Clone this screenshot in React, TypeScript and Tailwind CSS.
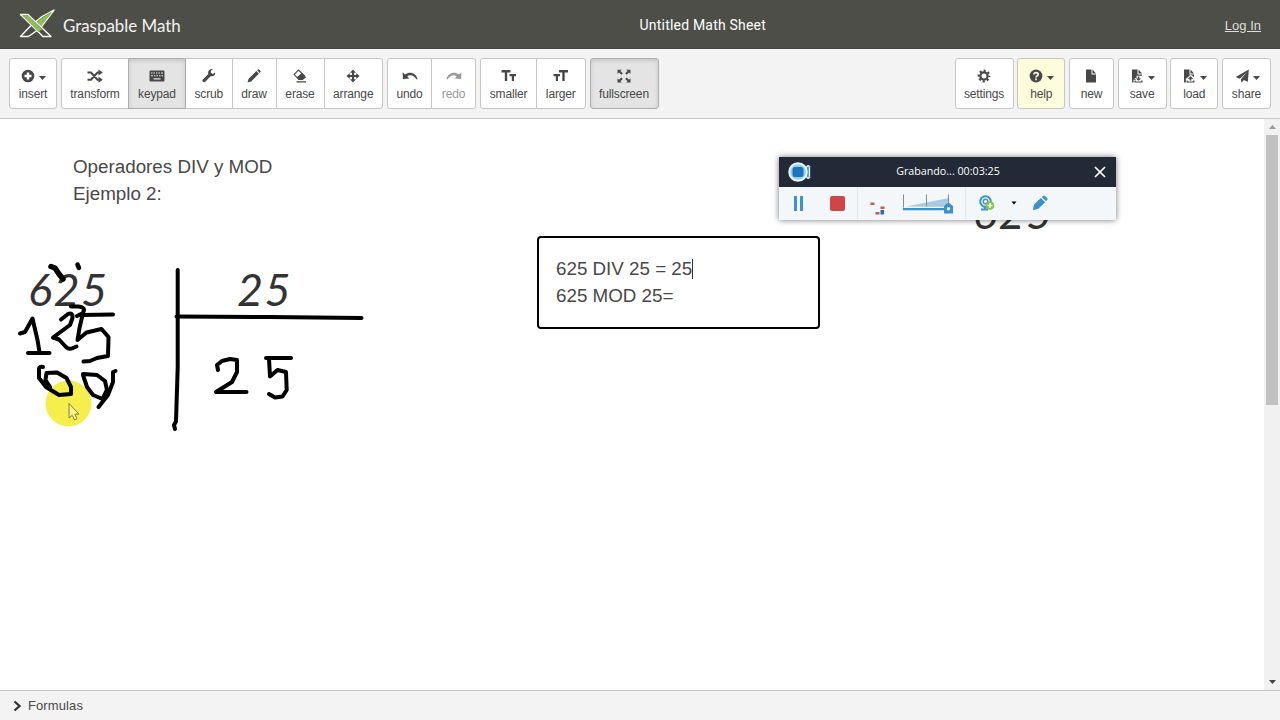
import type { ReactNode } from 'react';
import clsx from 'clsx';

const Icon = ({ children, w = 16 }: { children: ReactNode; w?: number }) => (
  <svg width={w} height="16" viewBox={`0 0 ${w} 16`} fill="currentColor">
    {children}
  </svg>
);

const Caret = () => <svg width="7" height="4" viewBox="0 0 7 4" className="mt-1" fill="currentColor"><path d="M0 0h7L3.500 4z" /></svg>;

const icons = {
  insert: (
    <Icon>
      <path fillRule="evenodd" d="M8 1.700a6.300 6.300 0 1 0 0 12.600A6.300 6.300 0 0 0 8 1.700zM6.800 4.500h2.400v2.300h2.300v2.400H9.200v2.300H6.800V9.200H4.500V6.800h2.300z" />
    </Icon>
  ),
  transform: (
    <Icon>
      <path d="M0.500 4.500H4l6.500 7.200H13M.5 11.700H4l6.500-7.200H13" fill="none" stroke="currentColor" strokeWidth="2" />
      <path d="M11.500 1.500l4.300 3-4.300 3zM11.500 8.700l4.300 3-4.300 3z" />
    </Icon>
  ),
  keypad: (
    <Icon>
      <path fillRule="evenodd" d="M1.500 2.500h13a1 1 0 0 1 1 1v9a1 1 0 0 1-1 1h-13a1 1 0 0 1-1-1v-9a1 1 0 0 1 1-1zM2 4.500v1h1.500v-1zm2.500 0v1H6v-1zm2.500 0v1h1.500v-1zm2.500 0v1H11v-1zm2.500 0v1h2v-1zM2 7.300v1h2v-1zm3 0v1h1.500v-1zm2.500 0v1H9v-1zm2.500 0v1h1.500v-1zm2.500 0v1H14v-1zM4.500 10.300v1.200h7v-1.200z" />
    </Icon>
  ),
  scrub: (
    <Icon>
      <path d="M14.200 4.600l-2.400 1.300-1.900-1.200.1-2.200 2.100-1.200c-2-.6-4.200.3-4.800 2.200-.3.8-.2 1.600 0 2.400L1.900 11.400c-.8.8-.5 1.800.1 2.300.6.6 1.600.7 2.300 0l5.300-5.500c2.800.7 5-1.100 4.600-3.600z" />
    </Icon>
  ),
  draw: (
    <Icon>
      <path d="M1.500 14.500l1.100-3.700 7.700-7.700 2.600 2.600-7.700 7.700zM11.100 2.300l.9-.9c.7-.5 3.300 1.800 2.600 2.700l-.9.9z" />
    </Icon>
  ),
  erase: (
    <Icon>
      <path d="M2.200 6.400L6.500 2l6 5.800-4.200 3.500H6.500z" fill="#fff" stroke="currentColor" strokeWidth="1.100" />
      <path d="M4.800 9.300L9.700 5l4.400 4.200-3.400 2.700H6.900zM4.500 13.200h9.500v1.200H4.500z" />
    </Icon>
  ),
  arrange: (
    <Icon>
      <path d="M8 1.500l3 3.200H9.100v2.200h2.200V5l3.200 3-3.200 3V9.100H9.100v2.200H11l-3 3.200-3-3.200h1.900V9.100H4.700V11L1.500 8l3.200-3v1.900h2.200V4.700H5z" />
    </Icon>
  ),
  undo: (
    <Icon>
      <path d="M.6 4.200l.3 6.900 6.500-.5-2.100-2c2.300-2.300 6.300-1.800 9.100 2.600h1.200C14 5 8 2.800 3.100 6.500z" />
    </Icon>
  ),
  redo: (
    <Icon>
      <path d="M15.400 4.200l-.3 6.900-6.500-.5 2.100-2C8.400 6.300 4.400 6.800 1.600 11.200H.4C2 5 8 2.800 12.900 6.500z" />
    </Icon>
  ),
  smaller: (
    <Icon>
      <path d="M.5 2h9v2.500H6.200V13H3.800V4.500H.5zM8.500 6H15v2.200h-2V13h-2.200V8.200H8.500z" />
    </Icon>
  ),
  larger: (
    <Icon>
      <path d="M6 2h9v2.500h-3.300V13H9.300V4.500H6zM.5 6H7v2.200H5V13H2.800V8.200H.5z" />
    </Icon>
  ),
  fullscreen: (
    <Icon>
      <path d="M1.500 1.700h4.300L4.500 3l2.300 2.300-1.500 1.500L3 4.500 1.500 6zM14.500 1.700h-4.300L11.500 3 9.200 5.300l1.500 1.500L13 4.500 14.500 6zM1.500 14.500h4.300l-1.300-1.300 2.300-2.300-1.500-1.500L3 11.700l-1.500-1.500zM14.500 14.500h-4.300l1.300-1.300-2.300-2.300 1.500-1.500 2.300 2.300 1.500-1.500z" />
    </Icon>
  ),
  settings: (
    <Icon>
      <circle cx="8" cy="8" r="3.600" fill="none" stroke="currentColor" strokeWidth="2.200" />
      <circle cx="8" cy="8" r="5.300" fill="none" stroke="currentColor" strokeWidth="2.200" strokeDasharray="2.100 2.063" strokeDashoffset="1.050" />
    </Icon>
  ),
  help: (
    <Icon>
      <circle cx="8" cy="8" r="6.400" />
      <path d="M5.800 6.600C5.800 3.800 10.200 4 10.200 6.400 10.200 8 8 7.800 8 9.500M8 10.600v1.700" fill="none" stroke="#fdfddf" strokeWidth="1.700" />
    </Icon>
  ),
  new: (
    <Icon>
      <path d="M3 1.500h5.500V6.500H13v8H3zM9.500 1.500L13 5.500H9.500z" />
    </Icon>
  ),
  save: (
    <Icon>
      <path d="M3 1.500h5.500V6.500H13v1.300H7.500v2.200H5.500L7 11.800H4.500v2.700H3zM9.500 1.500L13 5.500H9.500z" />
      <path d="M8.700 8.500h1.600v2h1.900l-2.700 2.300-2.700-2.300h1.900zM5.500 12.500h1.300v1h5.400v-1h1.300v2h-8z" />
    </Icon>
  ),
  load: (
    <Icon>
      <path d="M3 1.500h5.500V6.500H13v2.500L9.500 6.700 4.800 11v3.500H3zM9.500 1.500L13 5.500H9.500z" />
      <path d="M9.500 8.200l2.900 2.500h-2v1.800H8.600v-1.800h-2zM5.500 12.500h1.300v1h5.400v-1h1.300v2h-8z" />
    </Icon>
  ),
  share: (
    <Icon>
      <path d="M14.800 1.500l-.9 12.200-4-1.700-2.400 2.700-.6-3.500 6-7-7.200 6.500-4-1.800z" />
    </Icon>
  ),
};

interface ToolProps {
  name: keyof typeof icons;
  width: string;
  caret?: boolean;
  active?: boolean;
  disabled?: boolean;
  highlight?: boolean;
}

const Tool = ({ name, width, caret, active, disabled, highlight }: ToolProps) => (
  <button
    className={clsx(
      'flex h-[51px] shrink-0 flex-col items-center border pt-[9px] text-[12px] leading-[18px] tracking-[-0.15px] first:rounded-l-[3px] last:rounded-r-[3px] not-first:-ml-px',
      width,
      active ? 'z-10 border-[#adadad] bg-[#e4e4e4] shadow-[inset_0_2px_4px_rgba(0,0,0,0.13)]' : 'border-[#c6c6c6]',
      highlight && 'bg-[#fdfddc]',
      !active && !highlight && 'bg-white',
      disabled ? 'text-[#999]' : 'text-[#484848]'
    )}
  >
    <span className="flex h-4 items-center gap-[3px]">
      {icons[name]}
      {caret && <Caret />}
    </span>
    <span className="mt-px">{name}</span>
  </button>
);

const Group = ({ children }: { children: ReactNode }) => <div className="flex">{children}</div>;

const Logo = () => (
  <svg width="38" height="32" viewBox="0 0 38 32" strokeLinejoin="round" strokeWidth="1.400">
    <path d="M36 2L22.500 20 10.500 28.500H2.500L12 18.500 24 8.500z" fill="#4e4e49" stroke="#fff" />
    <path d="M34.500 4L22.500 18.500 18.500 14.500 25 9z" fill="#8cc152" />
    <path d="M2.500 6.500h7.500L33 28.500h-8z" fill="#4e4e49" stroke="#fff" />
    <path d="M4.500 7.300h5.200L24 21.500 20.500 24z" fill="#8cc152" />
  </svg>
);

// freehand strokes, in window coordinates
const strokes = [
  'M20 333.500L25 332L32.500 318.500L37.500 340L39.500 352',
  'M28 353H49.500',
  'M61 319.500L68 314Q73 312 72.500 318L70 325L53 337.500L59 339.500L66 347Q69 350 73 348L76.500 346.500',
  'M71 306.500H78Q84 307 84 310L83 313L77 316',
  'M82 315L113 314.500',
  'M83 313L79.500 328L77.500 340L86.500 332.500L101.500 329L108.500 337L108 356L97 358L90 361L83.500 361.500',
  'M43 367Q39 366 39 369V378L46 387L59 395L71 394V387L66.500 378L57 372.500L46.500 373L45.500 380L50 387',
  'M83 375L87 387L93 395L102.500 399L107 390L105 381L97 375L83 374',
  'M115.500 371L113 372V382L108 395L98.500 407',
  'M177.700 270V367L176 421.500L174 425L175 429',
  'M176.500 316.500L270 317L361.500 318',
  'M218 370L217 365L222 361L230 359L237 360V372L232 382L216 392H246.500',
  'M266 358L291 358',
  'M269 359L270 376.500L277.500 370L286 372L286.700 390L282.500 396.500L275 397.500L269 394',
];

const Ink = () => (
  <svg className="absolute top-0 left-0" width="1264" height="571" viewBox="0 119 1264 571" fill="none">
    <circle cx="68.500" cy="403.500" r="23" fill="#f5ee4c" />
    <g stroke="#000" strokeWidth="4" strokeLinecap="round" strokeLinejoin="round">
      {strokes.map((d) => <path key={d} d={d} />)}
      <path d="M51 266.500L55 268L59 274L63 279" strokeWidth="5.500" />
      <path d="M77.500 264.500L79 268" strokeWidth="4.500" />
    </g>
    <path d="M69 403.500V418L72.200 415.300L74.500 420L77 418.800L74.800 414.300L79 414z" fill="#f6f190" stroke="#77753a" strokeWidth="0.900" />
  </svg>
);

const MathTerm = ({ className, children }: { className: string; children: ReactNode }) => (
  <div className={clsx("absolute font-['Lato','Open_Sans',sans-serif] text-[45px] leading-[48px] tracking-[1.5px] text-[#333] italic", className)}>{children}</div>
);

const Recorder = () => (
  <div className="absolute top-[38px] left-[779px] h-[63px] w-[337px] bg-[#f4f7f9] font-['Open_Sans','Noto_Sans',sans-serif] shadow-[0_0_6px_rgba(0,0,0,0.55)]">
    <div className="flex h-[30px] items-center bg-[#212a36] pr-[10px] pl-[9px] text-white">
      <svg width="23" height="20" viewBox="0 0 23 20">
        <path d="M15 8l5-4.500 1.500.8v11.400l-1.500.8-5-4.500z" fill="#3498d8" stroke="#e8f3fb" strokeWidth="1.300" />
        <circle cx="10" cy="10" r="8.800" fill="#8fd0f3" stroke="#f2f8fc" strokeWidth="1.900" />
        <rect x="4.500" y="5" width="11" height="10" rx="2.500" fill="#1b74bb" />
      </svg>
      <span className="flex-1 pr-[9px] pb-px text-center text-[10.700px]">Grabando... 00:03:25</span>
      <svg width="12" height="12" viewBox="0 0 12 12" stroke="#fff" strokeWidth="1.700"><path d="M1 1l10 10M11 1L1 11" /></svg>
    </div>
    <div className="flex h-[32px] items-center">
      <div className="flex w-[39px] justify-center gap-[3px]">
        <span className="h-[15px] w-[3px] bg-[#3f93c9]" />
        <span className="h-[15px] w-[3px] bg-[#3f93c9]" />
      </div>
      <div className="flex w-[39px] justify-center">
        <span className="size-[15px] rounded-[2px] bg-[#cf4648]" />
      </div>
      <div className="flex h-8 w-[109px] items-center border-x border-[#e6e9eb]">
        <svg width="107" height="32" viewBox="858 187 107 32">
          <path d="M870.500 202.500h4v2.500h-4zM880.500 206.500h4v2.500h-4zM875.500 212h4v2.500h-4z" fill="#c2595b" />
          <path d="M880.500 210h3.500v4.500h-3.500z" fill="#2f68b5" />
          <path d="M906 206.500L949 198v9z" fill="#a6cbe3" />
          <path d="M903.500 194.500v13M926.500 194.500v12M948.500 194.500v12" stroke="#777f86" strokeWidth="0.900" />
          <path d="M903 208h46v2.200h-46z" fill="#3b91ca" />
          <path d="M944 206l4.500-3.500 4.500 3.500v7.500h-9z" fill="#3b91ca" />
          <circle cx="948.500" cy="208.700" r="1.700" fill="#eef5fa" />
        </svg>
      </div>
      <svg className="ml-[12px]" width="18" height="16" viewBox="0 0 18 16" fill="none">
        <circle cx="7.500" cy="6.500" r="5.300" stroke="#3f93c9" strokeWidth="2" />
        <circle cx="7.500" cy="6.500" r="2.300" stroke="#3f93c9" strokeWidth="1.500" />
        <path d="M7 12v1.500M3 14.500h7" stroke="#3f93c9" strokeWidth="1.800" />
        <circle cx="12" cy="10.500" r="4.300" fill="#83c340" />
        <path d="M12 8v5M9.500 10.500h5" stroke="#fff" strokeWidth="1.400" />
      </svg>
      <svg className="ml-[15px]" width="6" height="4" viewBox="0 0 6 4"><path d="M.5.5h5L3 3.500z" /></svg>
      <svg className="ml-[15px]" width="16" height="16" viewBox="0 0 16 16" fill="#3b91ca">
        <path d="M.8 15.200l1.200-5.700 6.900-6.600 4.300 4.300-6.900 6.600zM9.800 2L11 .9q1-.9 2 0l2.100 2.100q1 1 0 2L14 6.200z" />
      </svg>
    </div>
  </div>
);

export default function App() {
  return (
    <div className="flex h-[720px] w-[1280px] flex-col overflow-hidden bg-white font-['Liberation_Sans',Arial,sans-serif] text-[#484848]">
      <header className="flex h-[49px] shrink-0 items-center border-b border-[#464642] bg-[#4e4e49] pr-[19px] pl-[18px] text-white">
        <div className="flex flex-1 items-center gap-[7px]">
          <Logo />
          <span className="pt-[3px] font-['Lato',sans-serif] text-[16.900px] leading-6 text-[#f2f2f2]">Graspable Math</span>
        </div>
        <div className="pt-0.5 font-['Roboto',sans-serif] text-[14px] tracking-[0.200px]">Untitled Math Sheet</div>
        <div className="w-[495px] pt-[3px] text-right text-[13px] text-[#ddd] underline">Log In</div>
      </header>

      <div className="flex h-[70px] shrink-0 justify-between border-b border-[#c8c8c8] bg-[#f3f3f3] pt-[9px] pr-[9px] pl-[9px]">
        <div className="flex gap-1">
          <Group><Tool name="insert" width="w-12" caret /></Group>
          <Group>
            <Tool name="transform" width="w-[68px]" />
            <Tool name="keypad" width="w-[58px]" active />
            <Tool name="scrub" width="w-[47.5px]" />
            <Tool name="draw" width="w-[45px]" />
            <Tool name="erase" width="w-[49px]" />
            <Tool name="arrange" width="w-[59.5px]" />
          </Group>
          <Group>
            <Tool name="undo" width="w-[45px]" />
            <Tool name="redo" width="w-[45px]" disabled />
          </Group>
          <Group>
            <Tool name="smaller" width="w-[57px]" />
            <Tool name="larger" width="w-[49.5px]" />
          </Group>
          <Group><Tool name="fullscreen" width="w-[69px]" active /></Group>
        </div>
        <div className="flex gap-[3.700px]">
          <Group><Tool name="settings" width="w-[59px]" /></Group>
          <Group><Tool name="help" width="w-12" caret highlight /></Group>
          <Group><Tool name="new" width="w-[45px]" /></Group>
          <Group><Tool name="save" width="w-[49px]" caret /></Group>
          <Group><Tool name="load" width="w-12" caret /></Group>
          <Group><Tool name="share" width="w-[49px]" caret /></Group>
        </div>
      </div>

      <div className="flex h-[571px] shrink-0">
        <main className="relative flex-1 overflow-hidden text-[18.800px] leading-[27px]">
          <div className="absolute top-[34px] left-[73px] whitespace-nowrap">
            <p>Operadores DIV y MOD</p>
            <p>Ejemplo 2:</p>
          </div>
          <MathTerm className="top-[146px] left-[28px]">625</MathTerm>
          <MathTerm className="top-[146px] left-[237px]">25</MathTerm>
          <MathTerm className="top-[69px] left-[973px]">625</MathTerm>
          <Ink />
          <div className="absolute top-[117px] left-[537px] h-[93px] w-[283px] rounded-[4px] border-2 border-black pt-[17px] pl-[17px]">
            <p className="flex items-center">
              625 DIV 25 = 25<span className="h-5 w-px bg-[#333]" />
            </p>
            <p>625 MOD 25=</p>
          </div>
          <Recorder />
        </main>
        <div className="flex w-4 flex-col items-center justify-between bg-[#f1f1f1] py-[6px]">
          <svg width="7" height="4" viewBox="0 0 7 4" fill="#999"><path d="M0 4h7L3.500 0z" /></svg>
          <div className="mt-1.5 mb-auto h-[270px] w-3 bg-[#c1c1c1]" />
          <svg width="7" height="4" viewBox="0 0 7 4" fill="#444"><path d="M0 0h7L3.500 4z" /></svg>
        </div>
      </div>

      <footer className="flex flex-1 items-center gap-[6px] border-t border-[#c4c4c4] bg-[#f3f3f3] pl-[13px] text-[13px]">
        <svg width="9" height="12" viewBox="0 0 9 12" fill="none" stroke="#333" strokeWidth="2.300"><path d="M1.500 1.500L6.500 6l-5 4.500" /></svg>
        <span className="tracking-[0.100px]">Formulas</span>
      </footer>
    </div>
  );
}
